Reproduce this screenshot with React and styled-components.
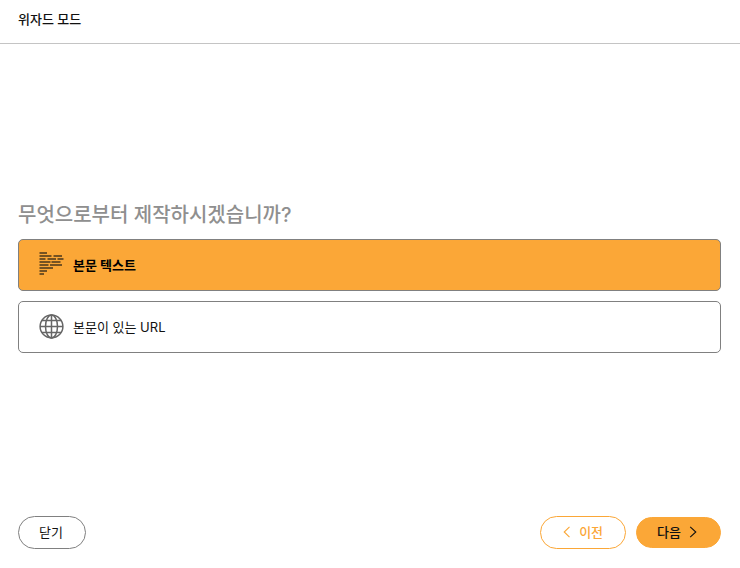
import React, { useState } from 'react'
import styled, { createGlobalStyle, css } from 'styled-components'

const GlobalStyle = createGlobalStyle`
    * {
        box-sizing:border-box;
    }
    body {
        margin:0;
        background-color:#fff;
        color:#111;
        font-family:Inter, "Noto Sans CJK KR", sans-serif;
        font-size:13px;
        line-height:20px;
    }
`;

const Page = styled.div`
    min-height:100vh;
    display:flex;
    flex-direction:column;
`;

const Header = styled.header`
    padding:9px 18px 14px;
    border-bottom:1px solid #c4c4c4;
`;

const Title = styled.h1`
    margin:0;
    font-size:13px;
    font-weight:500;
`;

const Main = styled.main`
    flex:1;
    display:flex;
    flex-direction:column;
    justify-content:center;
    padding:0 19px 0 18px;
`;

const Choices = styled.fieldset`
    min-width:0;
    margin:0;
    padding:0;
    border:none;
`;

const Question = styled.legend`
    padding:0;
    margin-bottom:9px;
    color:#8f8f8f;
    font-size:20px;
    font-weight:500;
    line-height:30px;
`;

const OptionList = styled.div`
    display:flex;
    flex-direction:column;
    gap:10px;
`;

const Option = styled.label`
    position:relative;
    display:flex;
    align-items:center;
    gap:9px;
    height:52px;
    padding:0 20px 1px;
    border:1px solid #808080;
    border-radius:5px;
    cursor:pointer;

    ${({ $active }) => $active && css`
        background-color:#fba737;
        color:#000;
        font-weight:700;
    `}

    &:focus-within {
        border-color:#666;
    }
`;

const Radio = styled.input`
    position:absolute;
    inset:0;
    width:100%;
    height:100%;
    margin:0;
    opacity:0;
    cursor:pointer;
`;

const Icon = styled.svg`
    flex:none;
    width:25px;
    height:25px;
    fill:none;
    stroke:${({ $color }) => $color};
    stroke-width:${({ $stroke }) => $stroke};
`;

const Footer = styled.footer`
    display:flex;
    align-items:center;
    justify-content:space-between;
    padding:7px 19px 19px 18px;
`;

const Steps = styled.div`
    display:flex;
    align-items:center;
    gap:10px;
`;

const Button = styled.button`
    display:flex;
    align-items:center;
    gap:6px;
    height:33px;
    padding:0 22px 2px 20px;
    border:1px solid #808080;
    border-radius:17px;
    background-color:#fff;
    color:#111;
    font:inherit;
    cursor:pointer;
`;

const PrevButton = styled(Button)`
    border-color:#fba737;
    color:#fba737;
    font-weight:500;
`;

const NextButton = styled(Button)`
    height:31px;
    padding-right:21px;
    border-color:#fba737;
    background-color:#fba737;
    font-weight:500;
`;

const Arrow = styled.svg`
    width:12px;
    height:12px;
    fill:none;
    stroke:currentColor;
    stroke-width:1.1;
`;

const TextIcon = () => (
  <Icon viewBox="0 0 25 25" $color="#4a371c" $stroke="1.5" aria-hidden="true">
    <path d="M.5 1H8M.5 4H12.5M14.5 4H23M.5 7H6.5M8.5 7H17M18.5 7H24.5M.5 10H11.5M12.5 10H21.5M.5 13H9.5M11 13H23M.5 16H14M.5 19H8M.5 22H5" />
  </Icon>
)

const GlobeIcon = () => (
  <Icon viewBox="0 0 25 25" $color="#666" $stroke="1.5" aria-hidden="true">
    <circle cx="12.5" cy="12.5" r="11.4" />
    <ellipse cx="12.5" cy="12.5" rx="6" ry="11.4" />
    <path d="M12.5 1V24M1 12.5H24M3 6.5H22M3 18.5H22" />
  </Icon>
)

const options = [
  { value: 'text', label: '본문 텍스트', icon: TextIcon },
  { value: 'url', label: '본문이 있는 URL', icon: GlobeIcon },
]

const App = () => {
  const [source, setSource] = useState('text')

  return (
    <>
      <GlobalStyle />
      <Page>
        <Header>
          <Title>위자드 모드</Title>
        </Header>
        <Main>
          <Choices>
            <Question>무엇으로부터 제작하시겠습니까?</Question>
            <OptionList>
              {options.map(({ value, label, icon: OptionIcon }) => (
                <Option key={value} $active={source === value}>
                  <Radio
                    type="radio"
                    name="source"
                    value={value}
                    checked={source === value}
                    onChange={(e) => setSource(e.target.value)}
                  />
                  <OptionIcon />
                  <span>{label}</span>
                </Option>
              ))}
            </OptionList>
          </Choices>
        </Main>
        <Footer>
          <Button type="button">닫기</Button>
          <Steps>
            <PrevButton type="button">
              <Arrow viewBox="0 0 12 12" aria-hidden="true">
                <path d="M8.5 .8L3.2 6L8.5 11.2" />
              </Arrow>
              이전
            </PrevButton>
            <NextButton type="button">
              다음
              <Arrow viewBox="0 0 12 12" aria-hidden="true">
                <path d="M3.2 .8L8.8 6L3.2 11.2" />
              </Arrow>
            </NextButton>
          </Steps>
        </Footer>
      </Page>
    </>
  )
}

export default App
